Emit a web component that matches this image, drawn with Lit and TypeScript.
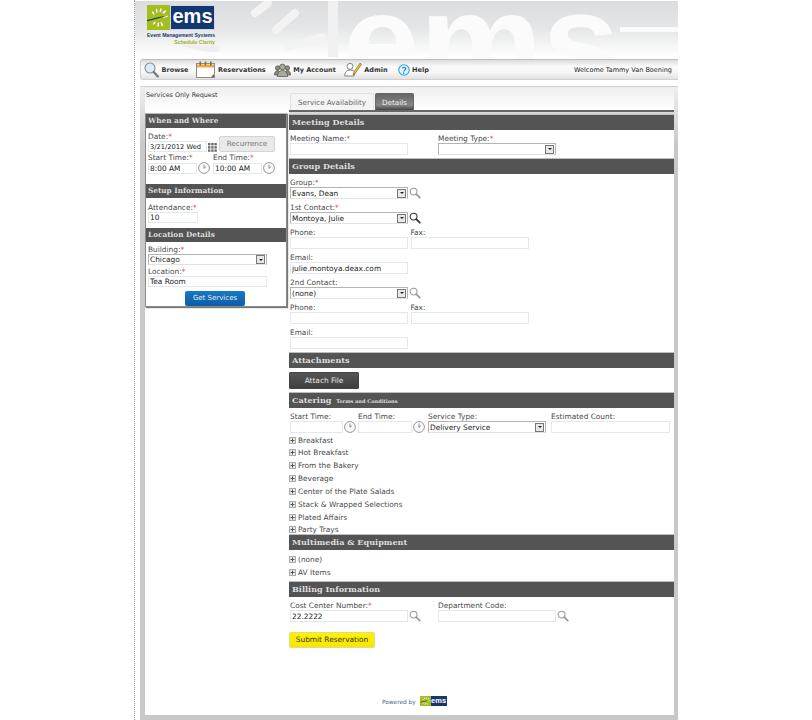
import { LitElement, html, css, svg } from "lit";
import { customElement } from "lit/decorators.js";

const searchIcon = (color = "#9a9a9a") => html`<svg class="ico" width="12" height="12" viewBox="0 0 12 12">
  <circle cx="4.6" cy="4.6" r="3.4" fill="#fff" stroke=${color} stroke-width="1.1" />
  <path d="M7.2 7.2l3.6 3.4" stroke=${color} stroke-width="1.8" stroke-linecap="round" />
</svg>`;

const clockIcon = html`<svg class="ico" width="12" height="12" viewBox="0 0 12 12">
  <circle cx="6" cy="6" r="5.4" fill="#fbfbfb" stroke="#8c8c8c" stroke-width="0.9" />
  <path d="M6 6.4V2.6M6 6.4l2.2-2" stroke="#777" stroke-width="0.8" fill="none" />
</svg>`;

const calendarIcon = html`<svg class="ico" width="9" height="9" viewBox="0 0 9 9" fill="#6d6d6d">
  ${[0, 3.2, 6.4].flatMap((y) => [0, 3.2, 6.4].map((x) => svg`<rect x=${x} y=${y} width="2.4" height="2.4" />`))}
</svg>`;

const plusIcon = html`<svg class="plus" width="7" height="7" viewBox="0 0 7 7">
  <rect x="0.5" y="0.5" width="6" height="6" fill="#e8e8e8" stroke="#aaa" />
  <path d="M1.5 3.5h4M3.5 1.5v4" stroke="#555" stroke-width="1" />
</svg>`;

// green square with the little sunburst
const sunburst = html`<svg class="sun" viewBox="0 0 24 24" preserveAspectRatio="none">
  <rect width="24" height="24" fill="#a6bd1f" />
  <g stroke="#fff" stroke-width="1.6" stroke-linecap="round">
    <path d="M6 7l1 1.4M10 4.5l.3 2M14.5 4l-.6 2M19 6l-2 1.6M21 10.5l-3.4 1" />
    <path d="M7 18l1.2-1.4M11.5 20l.4-2.4M16 19.5l-1-2.4" />
  </g>
  <path d="M0 14.5C6 13 14 11 24 9.5C15 12 7 14 0 15.6z" fill="#12386f" />
</svg>`;

const browseIcon = html`<svg width="15" height="16" viewBox="0 0 15 16">
  <circle cx="6" cy="6" r="5" fill="#dcebf5" stroke="#7b8f9c" stroke-width="1.1" />
  <path d="M9.8 10l4 4.4" stroke="#777" stroke-width="2.2" stroke-linecap="round" />
</svg>`;

const reservationsIcon = html`<svg width="19" height="17" viewBox="0 0 19 17">
  <rect x="0.5" y="2.5" width="18" height="14" fill="#fff" stroke="#8d8d8d" />
  <rect x="1" y="3.5" width="17" height="3" fill="#f2a63a" />
  <g fill="#8a6a3a"><rect x="3.5" y="0.5" width="1.6" height="4" /><rect x="8.7" y="0.5" width="1.6" height="4" /><rect x="14" y="0.5" width="1.6" height="4" /></g>
  <path d="M18 16v-3l-3 3z" fill="#666" />
</svg>`;

const accountIcon = html`<svg width="17" height="14" viewBox="0 0 17 14">
  <g fill="#8d8d82" stroke="#4e4e48" stroke-width="0.7">
    <circle cx="3.6" cy="5" r="2.2" /><circle cx="13.4" cy="5" r="2.2" />
    <path d="M0.5 12c0-3 1.5-4.4 3-4.4s3 1.4 3 4.4zM10.5 12c0-3 1.5-4.4 3-4.4s3 1.4 3 4.4z" />
  </g>
  <circle cx="8.5" cy="4" r="2.9" fill="#a9a99c" stroke="#4e4e48" stroke-width="0.7" />
  <path d="M3.4 13.5c0-4 2.2-6 5.1-6s5.1 2 5.1 6z" fill="#a6ad9c" stroke="#4e4e48" stroke-width="0.7" />
</svg>`;

const adminIcon = html`<svg width="18" height="15" viewBox="0 0 18 15">
  <circle cx="6" cy="4.4" r="3" fill="#fff" stroke="#666" stroke-width="0.8" />
  <path d="M0.7 14c0-4 2.2-6 5.3-6s4.6 1.4 5 3l-1 3z" fill="#fff" stroke="#666" stroke-width="0.8" />
  <path d="M9 13l1-3.2L16 1.2l1.6 1.2-6 8.4z" fill="#f0c22f" stroke="#6b5a1c" stroke-width="0.6" />
</svg>`;

const helpIcon = html`<svg width="12" height="12" viewBox="0 0 12 12">
  <circle cx="6" cy="6" r="5.2" fill="#e8f6fd" stroke="#29a3e0" stroke-width="1.1" />
  <path d="M4.2 4.4C4.5 3.3 7.8 3 7.8 4.6 7.8 5.9 6 5.9 5.8 7.6" fill="none" stroke="#1c82c4" stroke-width="1.2" />
  <circle cx="5.7" cy="9.1" r="0.8" fill="#1c82c4" />
</svg>`;

@customElement("app-root")
export class AppRoot extends LitElement {
  static styles = css`
    :host {
      display: block;
      width: 812px;
      height: 720px;
      overflow: hidden;
      background: #fff;
      font-family: "DejaVu Sans", sans-serif;
      font-size: 7.4px;
      color: #4a4a4a;
    }
    .page {
      box-sizing: border-box;
      margin-left: 134px;
      width: 544px;
      height: 720px;
      border-left: 1px dotted #999;
      display: flex;
      flex-direction: column;
    }

    /* top banner */
    .banner {
      position: relative;
      flex: none;
      height: 58px;
      margin-top: 1px;
      overflow: hidden;
      background: linear-gradient(#dcdddf, #e4e5e6 45%, #fff 96%);
    }
    .mark {
      position: absolute;
      left: 208px;
      top: -29px;
      font-family: "Liberation Sans", sans-serif;
      font-weight: 700;
      font-size: 138px;
      line-height: 138px;
      color: #fbfbfb;
    }
    .rays {
      position: absolute;
      inset: 0;
    }
    .logo {
      position: absolute;
      left: 12px;
      top: 4px;
      width: 68px;
    }
    .logo-top {
      display: flex;
      height: 25px;
    }
    .sun {
      display: block;
      width: 23px;
      height: 25px;
    }
    .logo-word {
      flex: 1;
      background: #12386f;
      color: #fff;
      border: 1px solid #cfd6e2;
      font-family: "Liberation Sans", sans-serif;
      font-weight: 700;
      font-size: 20px;
      line-height: 20px;
      text-align: center;
    }
    .logo-name {
      margin-top: 2px;
      font-family: "Liberation Sans", sans-serif;
      font-weight: 700;
      font-size: 5.05px;
      line-height: 7px;
      color: #12386f;
      white-space: nowrap;
    }
    .logo-sub {
      font-family: "Liberation Sans", sans-serif;
      font-weight: 700;
      font-size: 5.2px;
      line-height: 7px;
      color: #9db31f;
      text-align: right;
    }

    /* nav bar */
    .nav {
      box-sizing: border-box;
      flex: none;
      margin: 0 0 0 5px;
      height: 21px;
      padding: 0 6px 0 3px;
      display: flex;
      align-items: center;
      border: 1px solid #d0d0d0;
      border-top: 1px solid #bdbdbd;
      border-right: 0;
      border-radius: 3px 0 0 3px;
      background: linear-gradient(#dcdcdc, #fbfbfb 35%, #f6f6f6 65%, #e2e2e2);
      font-size: 6.5px;
      color: #333;
    }
    .nav a {
      display: flex;
      align-items: center;
      gap: 2.5px;
      font-weight: 700;
      margin-right: 8px;
    }
    .nav a.help {
      margin-left: 2px;
    }
    .welcome {
      margin-left: auto;
      font-size: 6.5px;
      color: #222;
    }

    /* main frame */
    .frame {
      box-sizing: border-box;
      flex: 1;
      display: flex;
      margin: 6px 0 0 5px;
      padding: 1px 5px 5px;
      background: linear-gradient(#d0d0d0 1px, #efefef 1px, #c8c8c8 60px);
      min-height: 0;
    }
    .inner {
      flex: 1;
      padding-top: 6px;
      background: linear-gradient(#efefef, #fff 24px) no-repeat, #fff;
      display: grid;
      grid-template-columns: 142px 385px;
      column-gap: 2px;
      align-content: start;
    }
    .left-col {
      margin-top: -6px;
    }
    .req-title {
      height: 26px;
      padding: 4px 0 0 1px;
      box-sizing: border-box;
      font-size: 6.4px;
      color: #333;
    }
    .side {
      box-sizing: border-box;
      height: 194px;
      border: 1px solid #8a8a8a;
      border-top: 1px solid #bbb;
      box-shadow: 1px 1px 1px #777;
      background: #fff;
    }

    /* section titles */
    .head {
      box-sizing: border-box;
      height: 16px;
      border-top: 1px solid #bdbdbd;
      background: #545454;
      color: #dedede;
      font-family: "DejaVu Serif", serif;
      font-weight: 700;
      font-size: 8.1px;
      line-height: 15px;
      padding-left: 3px;
      white-space: nowrap;
    }
    .head small {
      font-size: 5px;
      margin-left: 2px;
    }
    .side .head {
      height: 14px;
      border-top: 0;
      line-height: 14px;
      font-size: 7.3px;
      padding-left: 2px;
    }

    /* fields */
    .lbl {
      display: block;
      height: 9px;
      line-height: 9px;
      white-space: nowrap;
      color: #4a4a4a;
    }
    .lbl i {
      color: #e0202a;
      font-style: normal;
    }
    input,
    .sel {
      box-sizing: border-box;
      display: block;
      height: 12px;
      margin: 0;
      padding: 0 1px;
      border: 1px solid #e2e8ed;
      background: #fff;
      font: inherit;
      color: #222;
      outline: none;
    }
    .sel {
      display: flex;
      align-items: center;
      justify-content: space-between;
      border: 1px solid #b4b4b4;
      border-bottom-color: #e2e2e2;
      padding: 0 0 0 1px;
    }
    .arrow {
      box-sizing: border-box;
      width: 9px;
      height: 9px;
      margin-right: 1px;
      border: 1px solid #777;
      background: #e8e8e8;
      display: flex;
      align-items: center;
      justify-content: center;
    }
    .arrow::after {
      content: "";
      border: 2px solid transparent;
      border-top: 2.5px solid #222;
      border-bottom: 0;
    }
    .ctl {
      display: flex;
      align-items: center;
      gap: 1px;
    }
    .ico {
      display: block;
      flex: none;
    }
    .plus {
      display: block;
      flex: none;
    }
    .w118 {
      width: 118px;
    }
    .w119 {
      width: 119px;
    }
    .w52 {
      width: 53px;
    }
    .w54 {
      width: 54px;
    }

    /* left panel bodies */
    .s-when {
      height: 56px;
      padding: 4px 0 0 2px;
      box-sizing: border-box;
    }
    .when-top {
      display: flex;
      align-items: flex-end;
      gap: 1px;
    }
    .when-top input {
      width: 59px;
      height: 11px;
      font-size: 6.7px;
    }
    .recur {
      box-sizing: border-box;
      width: 56px;
      height: 16px;
      margin-left: 1px;
      border: 1px solid #d4d4d4;
      border-radius: 2px;
      background: #e9e9e9;
      color: #777;
      font-size: 7.2px;
      line-height: 14px;
      text-align: center;
    }
    .when-times {
      display: flex;
      gap: 3px;
      margin-top: 1px;
    }
    .when-times input {
      width: 49px;
      height: 11px;
    }
    .s-setup {
      height: 30px;
      padding: 5px 0 0 2px;
      box-sizing: border-box;
    }
    .s-setup input {
      width: 50px;
      height: 11px;
    }
    .s-loc {
      padding: 3px 0 0 2px;
    }
    .s-loc .sel {
      width: 119px;
      height: 11px;
      margin-bottom: 2px;
    }
    .s-loc input {
      width: 119px;
      height: 11px;
      margin-bottom: 4px;
    }
    .get {
      box-sizing: border-box;
      display: block;
      width: 60px;
      height: 15px;
      margin-left: 37px;
      border-radius: 2px;
      background: linear-gradient(#1a78c2, #0a5ea6);
      color: #e4eef8;
      font-size: 7px;
      line-height: 15px;
      text-align: center;
    }

    /* right column */
    .tabs {
      display: flex;
      gap: 1px;
      padding-left: 1px;
      height: 17px;
    }
    .tab {
      box-sizing: border-box;
      height: 17px;
      padding: 0 7px;
      border: 1px solid #e2e2e2;
      border-bottom: 0;
      background: #f4f4f4;
      color: #666;
      font-size: 7.2px;
      line-height: 17px;
      border-radius: 2px 2px 0 0;
    }
    .tab.on {
      padding: 0 6px;
      background: linear-gradient(#666, #868686 70%, #444);
      border-color: #666;
      color: #eee;
    }
    .tabline {
      height: 2px;
      background: #666;
    }
    .tabgap {
      height: 2px;
      background: #d8d8d8;
    }
    .body {
      padding: 4px 0 3px 1px;
    }
    .row {
      display: flex;
      height: 21px;
    }
    .stack {
      display: flex;
      flex-direction: column;
      gap: 4px;
    }
    .c148 {
      width: 148px;
      flex: none;
    }
    .c121 {
      width: 120.5px;
      flex: none;
    }
    .attach {
      box-sizing: border-box;
      width: 70px;
      height: 17px;
      margin-left: -1px;
      background: linear-gradient(#555, #3f3f3f);
      border: 1px solid #444;
      border-radius: 1px;
      color: #e6e6e6;
      font-size: 7.4px;
      line-height: 15px;
      text-align: center;
    }
    .cater-row {
      display: flex;
      height: 21px;
    }
    .cat1 {
      width: 68px;
      flex: none;
    }
    .cat2 {
      width: 70px;
      flex: none;
    }
    .cat3 {
      width: 123px;
      flex: none;
    }
    .exp {
      display: flex;
      flex-direction: column;
      gap: 3.85px;
      margin: 2.5px 0 0 -1px;
    }
    .exp div {
      display: flex;
      align-items: center;
      gap: 2px;
      height: 9px;
      line-height: 9px;
      white-space: nowrap;
    }
    .cater {
      height: 126px;
      box-sizing: border-box;
      padding-bottom: 0;
    }
    .media {
      height: 31px;
      box-sizing: border-box;
      padding-top: 4.5px;
    }
    .media .exp {
      margin-top: 0;
      gap: 4px;
    }
    .submit {
      box-sizing: border-box;
      width: 86px;
      height: 16px;
      margin: 10px 0 0 -1px;
      background: linear-gradient(#fff200, #f6e600);
      border: 1px solid #e3d98a;
      border-radius: 2px;
      color: #333;
      font-size: 7.4px;
      line-height: 14px;
      text-align: center;
    }
    .powered {
      display: flex;
      align-items: center;
      gap: 4px;
      margin-top: 48px;
      padding-left: 92px;
      height: 10px;
      font-size: 5.8px;
      color: #3f5f93;
    }
    .powered span:first-child {
      padding-top: 2px;
    }
    .mini {
      display: flex;
      width: 27px;
      height: 10px;
    }
    .mini .sun {
      width: 11px;
      height: 10px;
    }
    .mini b {
      flex: 1;
      background: #12386f;
      color: #fff;
      font-family: "Liberation Sans", sans-serif;
      font-size: 7.5px;
      line-height: 10px;
      text-align: center;
    }
  `;

  private label(text: string, required = false) {
    return html`<span class="lbl">${text}${required ? html`<i>*</i>` : ""}</span>`;
  }

  private select(value: string, cls = "w118") {
    return html`<div class="sel ${cls}"><span>${value}</span><span class="arrow"></span></div>`;
  }

  private expandList(items: string[]) {
    return html`<div class="exp">${items.map((t) => html`<div>${plusIcon}<span>${t}</span></div>`)}</div>`;
  }

  private renderSide() {
    return html`<aside class="side">
      <div class="head">When and Where</div>
      <div class="s-when">
        <div class="when-top">
          <div>${this.label("Date:", true)}<input value="3/21/2012 Wed" /></div>
          ${calendarIcon}
          <div class="recur">Recurrence</div>
        </div>
        <div class="when-times">
          <div>
            ${this.label("Start Time:", true)}
            <div class="ctl"><input value="8:00 AM" />${clockIcon}</div>
          </div>
          <div>
            ${this.label("End Time:", true)}
            <div class="ctl"><input value="10:00 AM" />${clockIcon}</div>
          </div>
        </div>
      </div>
      <div class="head">Setup Information</div>
      <div class="s-setup">${this.label("Attendance:", true)}<input value="10" /></div>
      <div class="head">Location Details</div>
      <div class="s-loc">
        ${this.label("Building:", true)} ${this.select("Chicago", "")}
        ${this.label("Location:", true)}<input value="Tea Room" />
        <div class="get">Get Services</div>
      </div>
    </aside>`;
  }

  private renderDetails() {
    return html`<section>
      <div class="tabs">
        <div class="tab">Service Availability</div>
        <div class="tab on">Details</div>
      </div>
      <div class="tabline"></div>
      <div class="tabgap"></div>

      <div class="head">Meeting Details</div>
      <div class="body">
        <div class="row">
          <div class="c148">${this.label("Meeting Name:", true)}<input class="w118" /></div>
          <div>${this.label("Meeting Type:", true)}${this.select("")}</div>
        </div>
      </div>

      <div class="head">Group Details</div>
      <div class="body stack">
        <div>${this.label("Group:", true)}<div class="ctl">${this.select("Evans, Dean")}${searchIcon()}</div></div>
        <div>${this.label("1st Contact:", true)}<div class="ctl">${this.select("Montoya, Julie")}${searchIcon("#333")}</div></div>
        <div class="row">
          <div class="c121">${this.label("Phone:")}<input class="w118" /></div>
          <div>${this.label("Fax:")}<input class="w118" /></div>
        </div>
        <div>${this.label("Email:")}<input class="w118" value="julie.montoya.deax.com" /></div>
        <div>${this.label("2nd Contact:")}<div class="ctl">${this.select("(none)")}${searchIcon()}</div></div>
        <div class="row">
          <div class="c121">${this.label("Phone:")}<input class="w118" /></div>
          <div>${this.label("Fax:")}<input class="w118" /></div>
        </div>
        <div>${this.label("Email:")}<input class="w118" /></div>
      </div>

      <div class="head">Attachments</div>
      <div class="body"><div class="attach">Attach File</div></div>

      <div class="head">Catering <small>Terms and Conditions</small></div>
      <div class="body cater">
        <div class="cater-row">
          <div class="cat1">${this.label("Start Time:")}<div class="ctl"><input class="w52" />${clockIcon}</div></div>
          <div class="cat2">${this.label("End Time:")}<div class="ctl"><input class="w54" />${clockIcon}</div></div>
          <div class="cat3">${this.label("Service Type:")}${this.select("Delivery Service")}</div>
          <div>${this.label("Estimated Count:")}<input class="w119" /></div>
        </div>
        ${this.expandList([
          "Breakfast",
          "Hot Breakfast",
          "From the Bakery",
          "Beverage",
          "Center of the Plate Salads",
          "Stack & Wrapped Selections",
          "Plated Affairs",
          "Party Trays",
        ])}
      </div>

      <div class="head">Multimedia & Equipment</div>
      <div class="body media">${this.expandList(["(none)", "AV Items"])}</div>

      <div class="head">Billing Information</div>
      <div class="body">
        <div class="row">
          <div class="c148">${this.label("Cost Center Number:", true)}<div class="ctl"><input class="w118" value="22.2222" />${searchIcon()}</div></div>
          <div>${this.label("Department Code:")}<div class="ctl"><input class="w118" />${searchIcon()}</div></div>
        </div>
        <div class="submit">Submit Reservation</div>
        <div class="powered">
          <span>Powered by</span>
          <span class="mini">${sunburst}<b>ems</b></span>
        </div>
      </div>
    </section>`;
  }

  render() {
    return html`<div class="page">
      <header class="banner">
        <div class="mark">ems</div>
        <svg class="rays" viewBox="0 0 543 58">
          <g stroke="#f3f3f4" stroke-width="8" stroke-linecap="round">
            <path d="M120 12l13-10M141 29l19-17M153 46l34-10" />
          </g>
          <path d="M42 40c14 6 28 8 40 8" stroke="#efefef" stroke-width="6" fill="none" stroke-linecap="round" />
          <rect x="193" y="0" width="10" height="56" fill="#f0f0f1" />
          <rect x="485" y="26" width="58" height="5" fill="#fbfbfb" />
        </svg>
        <div class="logo">
          <div class="logo-top">${sunburst}<div class="logo-word">ems</div></div>
          <div class="logo-name">Event Management Systems</div>
          <div class="logo-sub">Schedule Clarity</div>
        </div>
      </header>
      <nav class="nav">
        <a>${browseIcon}Browse</a>
        <a>${reservationsIcon}Reservations</a>
        <a>${accountIcon}My Account</a>
        <a>${adminIcon}Admin</a>
        <a class="help">${helpIcon}Help</a>
        <span class="welcome">Welcome Tammy Van Boening</span>
      </nav>
      <main class="frame">
        <div class="inner">
          <div class="left-col">
            <div class="req-title">Services Only Request</div>
            ${this.renderSide()}
          </div>
          ${this.renderDetails()}
        </div>
      </main>
    </div>`;
  }
}
